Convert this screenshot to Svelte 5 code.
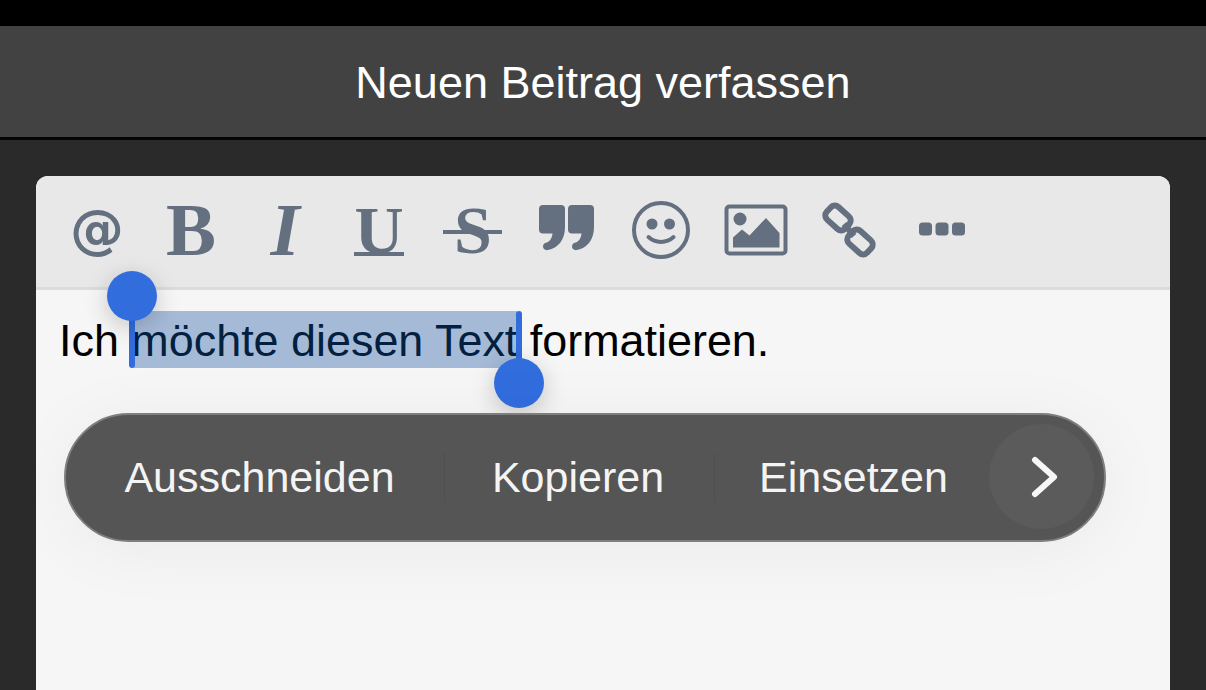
<script lang="ts">
  const menuItems = ["Ausschneiden", "Kopieren", "Einsetzen"];
</script>

<div class="screen">
  <div class="statusbar"></div>
  <header class="titlebar">Neuen Beitrag verfassen</header>

  <main class="page">
    <section class="editor">
      <div class="toolbar">
        <span class="tool at">@</span>
        <span class="tool bold">B</span>
        <span class="tool italic">I</span>
        <span class="tool underline">U</span>
        <span class="tool strike">S</span>
        <span class="tool">
          <svg width="60" height="60" viewBox="1 0 60 60">
            <path d="M7 5h18a4 4 0 0 1 4 4v18c0 13-7 21-17 23-3 .6-5-1-5-3.500 0-2 1-3.300 3-3.800 4-1 6-4.700 6.500-9.200H7a4 4 0 0 1-4-4V9a4 4 0 0 1 4-4zM36 5h18a4 4 0 0 1 4 4v18c0 13-7 21-17 23-3 .6-5-1-5-3.500 0-2 1-3.300 3-3.800 4-1 6-4.700 6.500-9.200H36a4 4 0 0 1-4-4V9a4 4 0 0 1 4-4z" fill="#64707f" />
          </svg>
        </span>
        <span class="tool">
          <svg width="60" height="60" viewBox="0 0 60 60">
            <circle cx="30" cy="30" r="27" fill="none" stroke="#64707f" stroke-width="4" />
            <circle cx="21" cy="24" r="5.500" fill="#64707f" />
            <circle cx="38.500" cy="24" r="5.500" fill="#64707f" />
            <path d="M17.500 37c7 6.500 18 6.500 25 0" fill="none" stroke="#64707f" stroke-width="4" stroke-linecap="round" />
          </svg>
        </span>
        <span class="tool">
          <svg width="66" height="60" viewBox="-1 0 66 60">
            <rect x="3.500" y="6.500" width="59" height="47" rx="3" fill="none" stroke="#64707f" stroke-width="4" />
            <circle cx="17" cy="19" r="6.500" fill="#64707f" />
            <path d="M10 47.500V37.500l9-8 7.500 6L43 18l13.500 15v14.500z" fill="#64707f" />
          </svg>
        </span>
        <span class="tool">
          <svg width="60" height="60" viewBox="0 0 60 60">
            <g fill="none" stroke="#64707f" stroke-width="6">
              <rect x="6.500" y="9.500" width="25" height="17" rx="5.500" transform="rotate(42 19 18)" />
              <rect x="28.500" y="33.500" width="25" height="17" rx="5.500" transform="rotate(42 41 42)" />
              <path d="M25 24l10 12" />
            </g>
          </svg>
        </span>
        <span class="tool">
          <svg width="60" height="60" viewBox="1 0 60 60">
            <g fill="#64707f">
              <rect x="7" y="22.500" width="13" height="13" rx="3.500" />
              <rect x="23.500" y="22.500" width="13" height="13" rx="3.500" />
              <rect x="40" y="22.500" width="13" height="13" rx="3.500" />
            </g>
          </svg>
        </span>
      </div>

      <div class="content">
        <p class="text">Ich <span class="selection">möchte diesen Text</span> formatieren.</p>
      </div>

      <div class="handle start"></div>
      <div class="handle end"></div>

      <div class="menu">
        {#each menuItems as item, i}
          <span class="menu-item item-{i}">{item}</span>
        {/each}
        <span class="more">
          <svg width="30" height="42" viewBox="0 0 30 42">
            <path d="M5 4l19 17L5 38" fill="none" stroke="#f7f7f7" stroke-width="6" stroke-linecap="round" stroke-linejoin="round" />
          </svg>
        </span>
      </div>
    </section>
  </main>
</div>

<style>
  :global(body) {
    margin: 0;
    background: #2a2a2a;
  }

  .screen {
    width: 1206px;
    height: 690px;
    overflow: hidden;
    display: flex;
    flex-direction: column;
    font-family: "Liberation Sans", Arial, sans-serif;
  }

  .statusbar {
    height: 26px;
    background: #000;
    flex: none;
  }

  .titlebar {
    height: 109px;
    padding-top: 2px;
    flex: none;
    border-bottom: 3px solid #050505;
    background: #424242;
    color: #fff;
    font-size: 45px;
    display: flex;
    align-items: center;
    justify-content: center;
  }

  .page {
    flex: 1;
    padding: 36px 36px 0;
    background: #2a2a2a;
  }

  .editor {
    position: relative;
    height: 100%;
    border-radius: 12px 12px 0 0;
    background: #f6f6f6;
    overflow: hidden;
  }

  .toolbar {
    height: 108px;
    padding: 0 0 3px 14px;
    background: #e8e8e9;
    border-bottom: 3px solid #dcdcdc;
    display: flex;
    align-items: center;
  }

  .tool {
    width: 94px;
    height: 60px;
    flex: none;
    display: flex;
    align-items: center;
    justify-content: center;
    color: #64707f;
    font-family: "Liberation Serif", serif;
    font-size: 75px;
    font-weight: 700;
    line-height: 60px;
  }

  .at {
    font-family: "DejaVu Sans", sans-serif;
    font-size: 54px;
  }

  .underline {
    position: relative;
    font-size: 68px;
    line-height: 56px;
  }

  .italic {
    font-style: italic;
  }

  .underline::after {
    content: "";
    position: absolute;
    left: 22px;
    bottom: 4px;
    width: 50px;
    height: 4px;
    background: #64707f;
  }

  .strike {
    position: relative;
    font-size: 68px;
  }

  .strike::after {
    content: "";
    position: absolute;
    left: 17px;
    top: 30px;
    width: 59px;
    height: 4px;
    background: #64707f;
  }

  .content {
    padding: 22px 23px 0;
  }

  .text {
    margin: 0;
    font-size: 44.9px;
    line-height: 57px;
    color: #000;
  }

  .selection {
    padding: 4px 0 2px;
    background: #a4bad7;
    color: #03203f;
  }

  .handle {
    position: absolute;
    width: 6px;
    height: 72px;
    border-radius: 3px;
    background: #326dde;
  }

  .handle::before {
    content: "";
    position: absolute;
    left: -22px;
    width: 50px;
    height: 50px;
    border-radius: 50%;
    background: #326dde;
    box-shadow: 0 6px 24px rgba(0, 0, 0, 0.2);
  }

  .handle.start {
    left: 93px;
    top: 120px;
  }

  .handle.start::before {
    top: -25px;
  }

  .handle.end {
    left: 480px;
    top: 135px;
  }

  .handle.end::before {
    bottom: -25px;
  }

  .menu {
    position: absolute;
    left: 28px;
    top: 237px;
    width: 1042px;
    height: 129px;
    box-sizing: border-box;
    border: 2px solid #7e7e7e;
    border-radius: 65px;
    background: #555;
    box-shadow: 0 8px 70px rgba(0, 0, 0, 0.05);
    display: flex;
    align-items: center;
    color: #f4f4f4;
    font-size: 43px;
  }

  .menu-item {
    height: 100%;
    display: flex;
    align-items: center;
    justify-content: center;
    flex: none;
    box-sizing: border-box;
  }

  .item-0 {
    width: 378px;
    padding-left: 9px;
    box-shadow: 1px 0 0 #4f4f4f;
    clip-path: inset(38px -1px);
  }

  .item-1 {
    width: 270px;
    padding-right: 2px;
    box-shadow: 1px 0 0 #4f4f4f;
    clip-path: inset(38px -1px);
  }

  .item-2 {
    width: 276px;
    padding-left: 3px;
  }

  .more {
    position: absolute;
    right: 10px;
    top: 9px;
    width: 105px;
    height: 105px;
    border-radius: 50%;
    background: #5b5b5b;
    display: flex;
    align-items: center;
    justify-content: center;
    padding-left: 6px;
    box-sizing: border-box;
  }
</style>
